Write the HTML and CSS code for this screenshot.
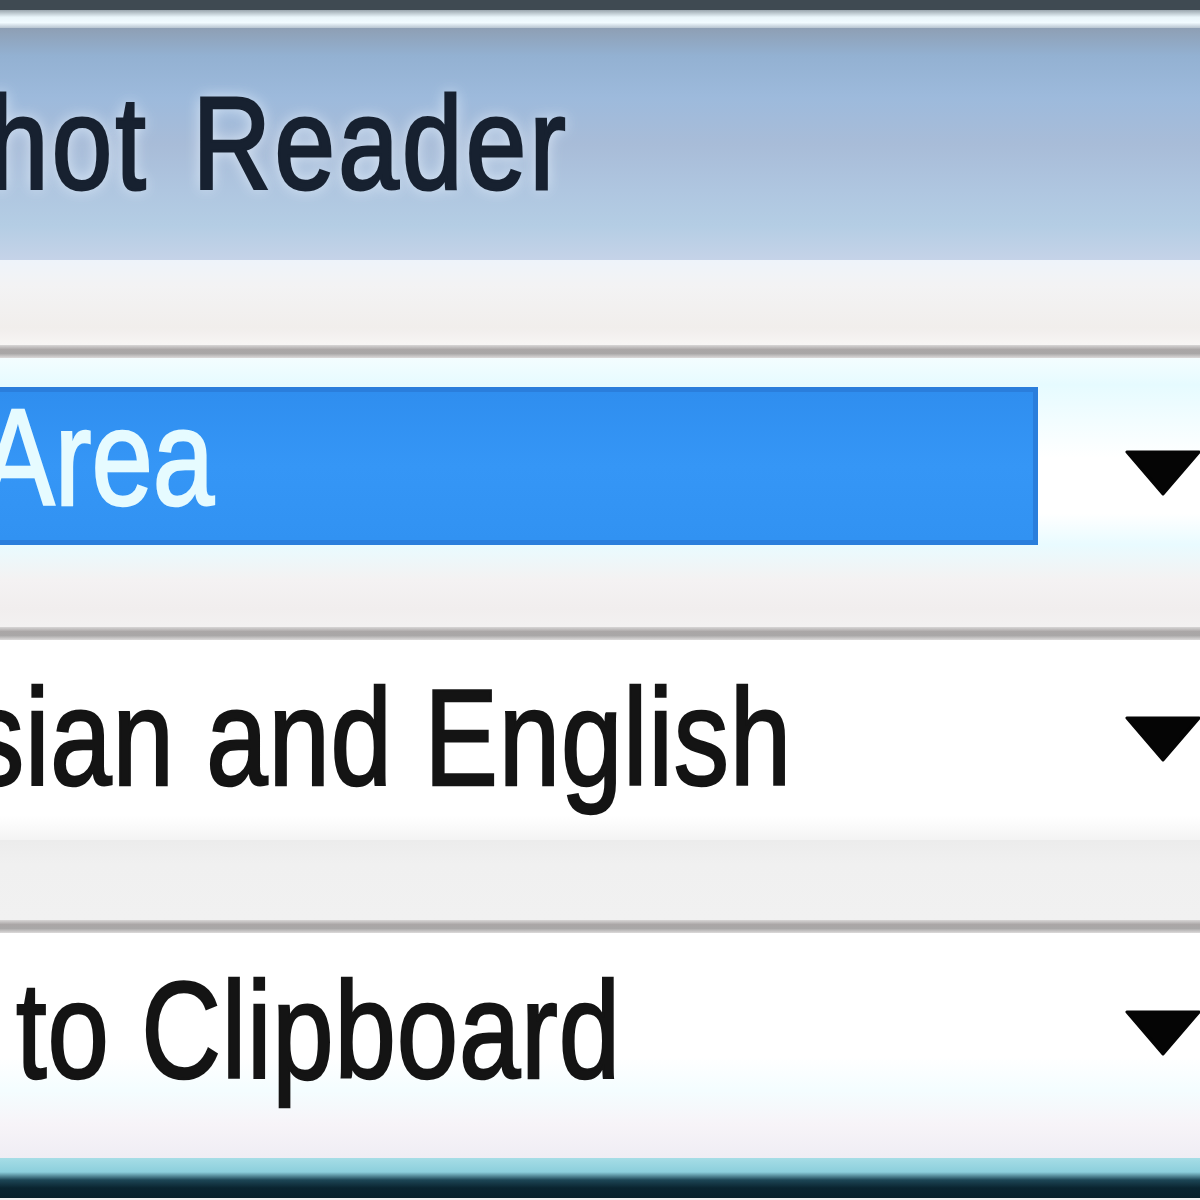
FILE: index.html
```html
<!DOCTYPE html>
<html lang="en">
<head>
<meta charset="utf-8">
<title>Screenshot Reader</title>
<link rel="stylesheet" href="styles.css">
</head>
<body>
<div class="window">
  <div class="frame-top"></div>
  <div class="frame-shine"></div>
  <div class="titlebar">
    <span class="title-text">hot Reader</span>
  </div>
  <div class="band band-top"></div>
  <div class="sep"></div>
  <div class="combo combo-focus">
    <div class="highlight"><span class="label label-sel">Area</span></div>
    <svg class="arrow arrow-1" viewBox="0 0 76 46" width="76" height="46"><polygon points="2,2 74,2 38,44" fill="#050505" stroke="#050505" stroke-width="3" stroke-linejoin="round"/></svg>
  </div>
  <div class="band band-mid"></div>
  <div class="sep"></div>
  <div class="combo combo-2">
    <span class="label label-2">sian and English</span>
    <svg class="arrow arrow-2" viewBox="0 0 76 46" width="76" height="48"><polygon points="2,2 74,2 38,44" fill="#050505" stroke="#050505" stroke-width="3" stroke-linejoin="round"/></svg>
  </div>
  <div class="band band-low"></div>
  <div class="sep"></div>
  <div class="combo combo-3">
    <span class="label label-3">to Clipboard</span>
    <svg class="arrow arrow-3" viewBox="0 0 76 46" width="76" height="48"><polygon points="2,2 74,2 38,44" fill="#050505" stroke="#050505" stroke-width="3" stroke-linejoin="round"/></svg>
  </div>
  <div class="frame-bottom"></div>
</div>
</body>
</html>
```
FILE: styles.css
```css
html, body {
  margin: 0;
  padding: 0;
  background: #f0f0f0;
}
body {
  width: 1200px;
  height: 1200px;
  overflow: hidden;
  font-family: "Liberation Sans", Arial, sans-serif;
}
.window {
  display: flex;
  flex-direction: column;
  width: 1200px;
  height: 1200px;
  overflow: hidden;
}
.frame-top {
  height: 10px;
  background: #3f4a52;
  flex: none;
}
.frame-shine {
  height: 18px;
  flex: none;
  background: linear-gradient(#9aa6ae 0%, #eaf6fb 40%, #f2fbff 70%, #b7c4d0 100%);
}
.titlebar {
  height: 232px;
  flex: none;
  background: linear-gradient(#8e9fb4 0%, #93b1d2 12%, #9dbadc 30%, #a8bcd8 50%, #afc6e0 70%, #b4cde4 85%, #c5d3e8 100%);
  display: flex;
  align-items: flex-start;
  overflow: hidden;
}
.title-text {
  display: inline-block;
  font-size: 131px;
  line-height: 150px;
  margin-top: 41px;
  margin-left: -12px;
  color: #172130;
  letter-spacing: 4px;
  word-spacing: 12px;
  transform: scaleX(0.83);
  transform-origin: left center;
  white-space: nowrap;
  -webkit-text-stroke: 3px #172130;
  text-shadow: 0 0 16px rgba(235, 245, 255, 0.9);
}
.band {
  flex: none;
}
.band-top {
  height: 85px;
  background: linear-gradient(#eef3fa 0%, #f3f3f4 30%, #f1eeec 80%, #f7f5f4 100%);
}
.band-mid {
  height: 47px;
  background: linear-gradient(#f4f2f3 0%, #f1eeee 60%, #f3f1f1 100%);
}
.band-low {
  height: 80px;
  background: linear-gradient(#ececec 0%, #f0f0f0 30%, #f1f1f1 100%);
}
.sep {
  height: 13px;
  flex: none;
  background: linear-gradient(#d8d6d6 0%, #aaa6a6 35%, #a9a7a7 65%, #dcdada 100%);
}
.combo {
  display: flex;
  align-items: flex-start;
  flex: none;
  overflow: hidden;
  position: relative;
}
.combo-focus {
  height: 222px;
  padding-top: 29px;
  box-sizing: border-box;
  background: linear-gradient(#f4fdff 0%, #e6fbff 12%, #ffffff 45%, #ffffff 70%, #e9fbff 84%, #f4f2f2 100%);
}
.highlight {
  width: 1043px;
  height: 158px;
  box-sizing: border-box;
  margin-left: -5px;
  background: linear-gradient(#2f8eef 0%, #3596f6 50%, #3192f2 100%);
  border: 5px solid #2a7edc;
  display: flex;
  align-items: flex-start;
  overflow: hidden;
  flex: none;
}
.label {
  display: inline-block;
  font-size: 138px;
  line-height: 154px;
  white-space: nowrap;
  transform: scaleX(0.8);
  transform-origin: left center;
  -webkit-text-stroke: 2.5px currentColor;
}
.label-sel {
  color: #e6fbff;
  line-height: 130px;
  margin-left: -19px;
}
.combo-2 {
  height: 200px;
  padding-top: 20px;
  box-sizing: border-box;
  background: linear-gradient(#ffffff 0%, #ffffff 88%, #f4f4f4 100%);
}
.label-2 {
  color: #141414;
  margin-left: -31px;
  letter-spacing: 1px;
}
.combo-3 {
  height: 225px;
  padding-top: 20px;
  box-sizing: border-box;
  background: linear-gradient(#ffffff 0%, #ffffff 55%, #f4fdff 70%, #f7f4f8 85%, #efedf4 100%);
}
.label-3 {
  color: #141414;
  margin-left: 16px;
  letter-spacing: 1px;
}
.arrow {
  flex: none;
  margin-left: auto;
  margin-right: -1px;
}
.arrow-1 {
  margin-top: 63px;
}
.arrow-2 {
  margin-top: 55px;
}
.arrow-3 {
  margin-top: 56px;
}
.frame-bottom {
  height: 40px;
  flex: none;
  background: linear-gradient(#a6dde6 0%, #8ccfdc 35%, #1d4656 55%, #0a2430 75%, #08202a 100%);
}
```
